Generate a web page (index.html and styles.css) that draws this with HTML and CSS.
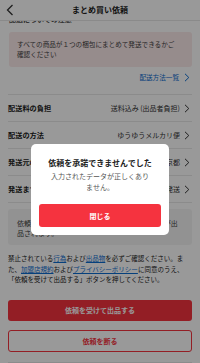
FILE: index.html
```html
<!DOCTYPE html>
<html lang="ja">
<head>
<meta charset="utf-8">
<link rel="stylesheet" href="styles.css">
</head>
<body>
<div class="page">
  <header class="header">
    <svg class="back" width="8" height="12" viewBox="0 0 8 12"><path d="M6.5 1 L1.5 6 L6.5 11" fill="none" stroke="#333" stroke-width="1.3"/></svg>
    <div class="title">まとめ買い依頼</div>
  </header>
  <div class="content">
    <div class="cut-label">配送についての注意</div>
    <div class="notice">すべての商品が１つの梱包にまとめて発送できるかご確認ください</div>
    <div class="link-row"><span class="link">配送方法一覧</span><svg class="chev" width="6" height="9" viewBox="0 0 6 9"><path d="M1 0.8 L4.8 4.5 L1 8.2" fill="none" stroke="#0b6bcf" stroke-width="1"/></svg></div>
    <div class="row"><span class="label">配送料の負担</span><span class="value">送料込み (出品者負担)</span><svg class="chev" width="6" height="9" viewBox="0 0 6 9"><path d="M1 0.8 L4.8 4.5 L1 8.2" fill="none" stroke="#333" stroke-width="1"/></svg></div>
    <div class="row"><span class="label">配送の方法</span><span class="value">ゆうゆうメルカリ便</span><svg class="chev" width="6" height="9" viewBox="0 0 6 9"><path d="M1 0.8 L4.8 4.5 L1 8.2" fill="none" stroke="#333" stroke-width="1"/></svg></div>
    <div class="row"><span class="label">発送元の地域</span><span class="value">東京都</span><svg class="chev" width="6" height="9" viewBox="0 0 6 9"><path d="M1 0.8 L4.8 4.5 L1 8.2" fill="none" stroke="#333" stroke-width="1"/></svg></div>
    <div class="row"><span class="label">発送までの日数</span><span class="value">1~2日で発送</span><svg class="chev" width="6" height="9" viewBox="0 0 6 9"><path d="M1 0.8 L4.8 4.5 L1 8.2" fill="none" stroke="#333" stroke-width="1"/></svg></div>
    <div class="info">依頼を受けると、購入者のためにまとめた商品が出品されます。</div>
    <p class="terms">禁止されている<a class="tlink">行為</a>および<a class="tlink">出品物</a>を必ずご確認ください。また、<a class="tlink">加盟店規約</a>および<a class="tlink">プライバシーポリシー</a>に同意のうえ、「依頼を受けて出品する」ボタンを押してください。</p>
    <div class="btn-primary">依頼を受けて出品する</div>
    <div class="btn-outline">依頼を断る</div>
    <div class="bottom-line"></div>
  </div>
</div>
<div class="overlay">
  <div class="modal">
    <div class="modal-title">依頼を承諾できませんでした</div>
    <div class="modal-msg">入力されたデータが正しくありません。</div>
    <div class="modal-btn">閉じる</div>
  </div>
</div>
</body>
</html>
```
FILE: styles.css
```css
html, body {
  margin: 0;
  padding: 0;
  background: #fff;
}
body {
  font-family: "Noto Sans CJK JP", "Noto Sans", sans-serif;
  color: #222;
  width: 200px;
  height: 363px;
  overflow: hidden;
}
.page {
  width: 200px;
}
.header {
  position: relative;
  z-index: 1;
  height: 20px;
  background: #fff;
  border-bottom: 1px solid #e6e6e6;
  display: flex;
  align-items: center;
  justify-content: center;
}
.back {
  position: absolute;
  left: 6px;
  top: 4px;
}
.title {
  font-size: 8px;
  font-weight: 700;
  line-height: 12px;
  color: #222;
}
.content {
  padding: 0 8px;
}
.cut-label {
  margin-top: -6px;
  margin-left: 1px;
  font-size: 7px;
  line-height: 9px;
  height: 9px;
  color: #555;
  font-weight: 700;
}
.notice {
  margin-top: 8px;
  margin-left: 1px;
  background: #fbe9ea;
  border-radius: 3px;
  padding: 7px 12px 8px 8px;
  font-size: 6.6px;
  line-height: 10px;
  color: #444;
}
.link-row {
  display: flex;
  justify-content: flex-end;
  align-items: center;
  padding: 4px 2px 11px 0;
  height: 12px;
  border-bottom: 1px solid #e8e8e8;
}
.link {
  font-size: 6.6px;
  line-height: 12px;
  color: #0b6bcf;
  margin-right: 5px;
}
.row {
  display: flex;
  align-items: center;
  height: 26px;
  border-bottom: 1px solid #e8e8e8;
  padding-right: 2px;
}
.label {
  font-size: 7.2px;
  font-weight: 700;
  color: #222;
  white-space: nowrap;
}
.value {
  margin-left: auto;
  font-size: 7px;
  color: #333;
  margin-right: 4px;
  white-space: nowrap;
}
.chev {
  display: block;
  flex: none;
}
.info {
  margin-top: 6px;
  background: #f4f4f4;
  border-radius: 3px;
  padding: 10px 9px 7px 9px;
  font-size: 7px;
  line-height: 9.5px;
  color: #444;
}
.terms {
  margin: 8px 0 0 0;
  font-size: 6.5px;
  line-height: 10.5px;
  color: #222;
}
.tlink {
  color: #0b6bcf;
  text-decoration: underline;
}
.btn-primary {
  margin-top: 15px;
  height: 21px;
  border-radius: 3px;
  background: #f5333f;
  color: #fff;
  font-size: 7px;
  font-weight: 700;
  display: flex;
  align-items: center;
  justify-content: center;
}
.btn-outline {
  margin-top: 9px;
  height: 20px;
  border: 1px solid #f5333f;
  border-radius: 3px;
  color: #f5333f;
  font-size: 7px;
  font-weight: 700;
  display: flex;
  align-items: center;
  justify-content: center;
}
.bottom-line {
  margin-top: 10px;
  border-top: 1px solid #e8e8e8;
}
.overlay {
  position: fixed;
  left: 0;
  top: 0;
  width: 200px;
  height: 363px;
  background: rgba(0, 0, 0, 0.4);
  z-index: 10;
  display: flex;
  flex-direction: column;
  align-items: center;
  padding-top: 144px;
  box-sizing: border-box;
}
.modal {
  width: 138px;
  background: #fff;
  border-radius: 5px;
  padding: 13px 8px 8px 8px;
  box-sizing: border-box;
  text-align: center;
}
.modal-title {
  font-size: 8px;
  font-weight: 700;
  line-height: 12px;
  color: #222;
}
.modal-msg {
  margin-top: 1.5px;
  padding: 0 11px;
  font-size: 7px;
  line-height: 11px;
  color: #555;
}
.modal-btn {
  margin-top: 11.5px;
  height: 23px;
  border-radius: 3px;
  background: #f5333f;
  color: #fff;
  font-size: 7px;
  font-weight: 700;
  display: flex;
  align-items: center;
  justify-content: center;
}
```
